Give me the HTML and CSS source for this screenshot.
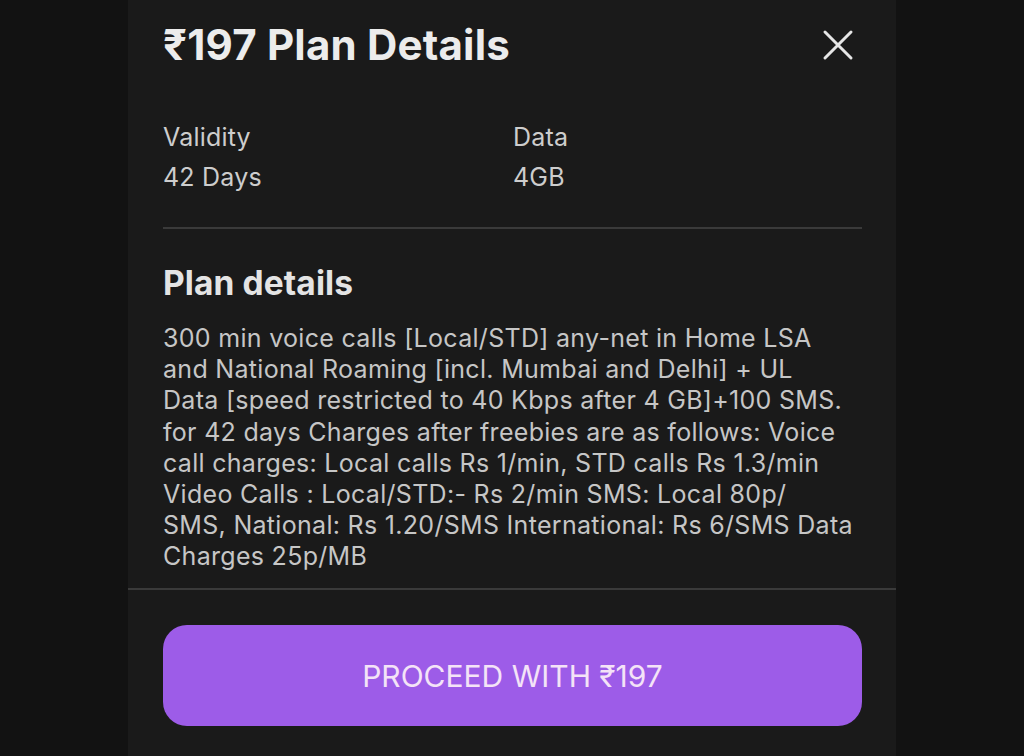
FILE: index.html
```html
<!DOCTYPE html>
<html lang="en">
<head>
<meta charset="utf-8">
<title>₹197 Plan Details</title>
<link rel="stylesheet" href="styles.css">
</head>
<body>
<div class="sheet">
  <div class="inner">
    <header class="head">
      <h1 class="title">₹197 Plan Details</h1>
      <button class="close" aria-label="Close">
        <svg width="32" height="32" viewBox="0 0 32 32"><path d="M3 3 L29 29 M29 3 L3 29" stroke="#e6e6e6" stroke-width="3" stroke-linecap="round" fill="none"/></svg>
      </button>
    </header>
    <div class="facts">
      <div class="fact">
        <div class="label">Validity</div>
        <div class="value">42 Days</div>
      </div>
      <div class="fact">
        <div class="label">Data</div>
        <div class="value">4GB</div>
      </div>
    </div>
    <section class="details">
      <h2 class="subtitle">Plan details</h2>
      <p class="desc">300 min voice calls [Local/STD] any-net in Home LSA<br>and National Roaming [incl. Mumbai and Delhi] + UL<br>Data [speed restricted to 40 Kbps after 4 GB]+100 SMS.<br>for 42 days Charges after freebies are as follows: Voice<br>call charges: Local calls Rs 1/min, STD calls Rs 1.3/min<br>Video Calls : Local/STD:- Rs 2/min SMS: Local 80p/<br>SMS, National: Rs 1.20/SMS International: Rs 6/SMS Data<br>Charges 25p/MB</p>
    </section>
  </div>
  <footer class="foot">
    <button class="proceed">PROCEED WITH ₹197</button>
  </footer>
</div>
</body>
</html>
```
FILE: styles.css
```css
* { box-sizing: border-box; }
html, body { margin: 0; padding: 0; }
body {
  background: #121212;
  font-family: Inter, "Noto Sans", sans-serif;
  color: #d0d0d0;
  display: flex;
  justify-content: center;
  height: 756px;
  overflow: hidden;
}
.sheet {
  width: 768px;
  height: 756px;
  background: #1a1a1a;
  display: flex;
  flex-direction: column;
}
.inner {
  padding: 0 34px 0 35px;
}
.head {
  display: flex;
  justify-content: space-between;
  align-items: center;
  padding-top: 20px;
}
.title {
  margin: 0;
  font-size: 42px;
  font-weight: 700;
  color: #ececec;
  line-height: 50px;
  letter-spacing: 0.2px;
}
.close {
  background: none;
  border: 0;
  padding: 0;
  margin-right: 8px;
  width: 32px;
  height: 32px;
  display: flex;
}
.facts {
  display: grid;
  grid-template-columns: 350px 1fr;
  padding-top: 48px;
  padding-bottom: 31px;
  border-bottom: 2px solid #3a3a3a;
}
.label, .value {
  font-size: 25px;
  line-height: 38px;
  color: #cdcdcd;
  letter-spacing: 0.2px;
}
.value {
  padding-top: 2px;
}
.details {
  padding-top: 34px;
}
.subtitle {
  margin: 0;
  font-size: 33.5px;
  font-weight: 700;
  color: #e4e4e4;
  line-height: 40px;
  letter-spacing: 0.1px;
}
.desc {
  margin: 20px 0 0;
  font-size: 25px;
  line-height: 31.2px;
  color: #c6c6c6;
  letter-spacing: 0.3px;
  white-space: nowrap;
  padding-bottom: 15px;
}
.foot {
  border-top: 2px solid #3a3a3a;
  padding: 35px 34px 0 35px;
}
.proceed {
  width: 100%;
  height: 101px;
  border: 0;
  border-radius: 24px;
  background: #9d5ce8;
  color: #f4e3f7;
  font-family: Inter, "Noto Sans", sans-serif;
  font-size: 30px;
  font-weight: 400;
  padding-top: 3px;
}
```
